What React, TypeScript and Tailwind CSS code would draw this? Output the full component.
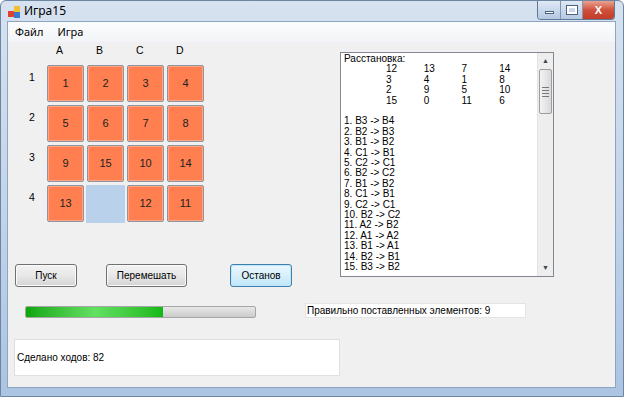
import React from 'react'

const tiles: (number | null)[][] = [
  [1, 2, 3, 4],
  [5, 6, 7, 8],
  [9, 15, 10, 14],
  [13, null, 12, 11],
]

const layout = [
  [12, 13, 7, 14],
  [3, 4, 1, 8],
  [2, 9, 5, 10],
  [15, 0, 11, 6],
]

const moves = [
  'B3 -> B4',
  'B2 -> B3',
  'B1 -> B2',
  'C1 -> B1',
  'C2 -> C1',
  'B2 -> C2',
  'B1 -> B2',
  'C1 -> B1',
  'C2 -> C1',
  'B2 -> C2',
  'A2 -> B2',
  'A1 -> A2',
  'B1 -> A1',
  'B2 -> B1',
  'B3 -> B2',
]

const sans = { fontFamily: '"Liberation Sans", Arial, sans-serif' }

const WinButton = ({ label, focused, className }: { label: string; focused?: boolean; className?: string }) => (
  <div
    className={
      'h-[23px] rounded-[3px] border flex items-center justify-center text-[10px] text-black ' +
      (focused
        ? 'border-[#3c7fb1] bg-gradient-to-b from-[#eaf6fd] via-[#d9f0fc] to-[#bee6fd] shadow-[inset_0_0_0_1px_#c4e5f6] '
        : 'border-[#707070] bg-gradient-to-b from-[#f2f2f2] via-[#e8e8e8] to-[#d4d4d4] shadow-[inset_0_0_0_1px_#fbfbfb] ') +
      (className || '')
    }
  >
    {label}
  </div>
)

export default function App() {
  return (
    <div
      className="w-[624px] h-[397px] flex flex-col overflow-hidden border border-[#6f86a3] rounded-t-[6px] bg-gradient-to-b from-[#d6e2ef] via-[#c3d5ea] to-[#abc4e2]"
      style={sans}
    >
      {/* title bar */}
      <div className="h-[20px] flex items-start shrink-0">
        <svg width="14" height="14" viewBox="0 0 14 14" className="ml-[7px] mt-[4px]">
          <rect x="0" y="6" width="6" height="6" fill="#e04030" />
          <rect x="6" y="1" width="6" height="6" fill="#f0c030" />
          <rect x="6" y="7" width="6" height="6" fill="#3a7ad0" />
        </svg>
        <span className="ml-[2px] mt-[3px] text-[12px] text-black" style={{ fontFamily: '"Noto Sans", sans-serif', lineHeight: '14px' }}>
          Игра15
        </span>
        <div className="ml-auto mr-[8px] flex h-[19px] border border-t-0 border-[#5f7897] rounded-b-[4px] overflow-hidden">
          <div className="w-[23px] bg-gradient-to-b from-[#dfe9f5] to-[#b3c8e2] border-r border-[#7f95b0] flex items-center justify-center">
            <div className="w-[9px] h-[3px] bg-white border border-[#50627a] mt-[5px]" />
          </div>
          <div className="w-[22px] bg-gradient-to-b from-[#dfe9f5] to-[#b3c8e2] border-r border-[#7f95b0] flex items-center justify-center">
            <div className="w-[10px] h-[8px] border-2 border-white outline outline-1 outline-[#50627a]" />
          </div>
          <div className="w-[31px] bg-gradient-to-b from-[#e8a190] via-[#d0503c] to-[#c13b28] flex items-center justify-center text-white text-[11px] font-bold">
            X
          </div>
        </div>
      </div>

      {/* client area */}
      <div className="ml-[6px] mr-[7px] mb-[8px] flex-1 bg-[#f0f0f0] border border-[#8fa5bf] flex flex-col">
        {/* menu */}
        <div className="h-[20px] flex items-center gap-[14px] pl-[7px] text-[11px] text-black bg-gradient-to-b from-[#fbfcfd] to-[#f2f4f7]" style={{ fontFamily: '"Noto Sans", sans-serif' }}>
          <span>Файл</span>
          <span>Игра</span>
        </div>

        <div className="flex">
          {/* left part */}
          <div className="w-[332px] flex flex-col">
            <div className="flex pl-[39px] h-[23px] pt-[2px] text-[10.5px] leading-[12px] text-black">
              {['A', 'B', 'C', 'D'].map((c) => (
                <div key={c} className="w-[40px] pl-[9px]">
                  {c}
                </div>
              ))}
            </div>
            <div className="flex flex-col gap-[3px]">
              {tiles.map((row, r) => (
                <div key={r} className="flex h-[37px]">
                  <div className="w-[39px] pl-[21px] pt-[6px] text-[10.5px] leading-[12px] text-black">{r + 1}</div>
                  {row.map((n, c) =>
                    n === null ? (
                      <div key={c} className="w-[39px] h-[38px] -ml-[1px] mr-[2px] bg-[#b9d1ea]" />
                    ) : (
                      <div
                        key={c}
                        className="w-[37px] h-[37px] mr-[3px] bg-[#ff7f50] border border-[#8d96a0] rounded-[2px] shadow-[inset_0_0_0_1px_#ffa585] flex items-center justify-center text-[11px] text-[#222]"
                      >
                        {n}
                      </div>
                    )
                  )}
                </div>
              ))}
            </div>
            <div className="flex mt-[42px] pl-[7px]">
              <WinButton label="Пуск" className="w-[62px]" />
              <WinButton label="Перемешать" className="w-[81px] ml-[29px]" />
              <WinButton label="Останов" focused className="w-[62px] ml-[43px]" />
            </div>
          </div>

          {/* list box */}
          <div className="mt-[10px] w-[214px] h-[225px] border border-[#828790] bg-white flex text-[10px] leading-[10.4px] text-black">
            <div className="flex-1 pl-[3px] pt-[1px] overflow-hidden">
              <div>Расстановка:</div>
              {layout.map((row, i) => (
                <div key={i} className="flex pl-[42px]">
                  {row.map((v, j) => (
                    <div key={j} className="w-[42px]">
                      {v}
                    </div>
                  ))}
                </div>
              ))}
              <div className="h-[10.4px]" />
              {moves.map((m, i) => (
                <div key={i}>
                  {i + 1}. {m}
                </div>
              ))}
            </div>
            <div className="w-[16px] bg-[#eeeeee] border-l border-[#e3e3e3] flex flex-col">
              <div className="h-[16px] flex items-center justify-center text-[7px] text-[#444]">▲</div>
              <div className="mx-[1px] h-[45px] rounded-[2px] border border-[#9a9da2] bg-gradient-to-r from-[#f3f3f3] to-[#d9d9d9] flex flex-col items-center justify-center gap-[2px]">
                <div className="w-[7px] h-[1px] bg-[#777]" />
                <div className="w-[7px] h-[1px] bg-[#777]" />
                <div className="w-[7px] h-[1px] bg-[#777]" />
                <div className="w-[7px] h-[1px] bg-[#777]" />
              </div>
              <div className="flex-1" />
              <div className="h-[16px] flex items-center justify-center text-[7px] text-[#444]">▼</div>
            </div>
          </div>
        </div>

        {/* progress + counter */}
        <div className="flex items-start mt-[16px]">
          <div className="ml-[17px] mt-[3px] w-[231px] h-[12px] rounded-[2px] border border-[#a6a6a6] bg-gradient-to-b from-[#e8e8e8] via-[#dadada] to-[#cbcbcb] overflow-hidden">
            <div className="h-full w-[60%] bg-gradient-to-r from-[#0aa60a] via-[#62e062] to-[#11b811]" />
          </div>
          <div className="ml-[49px] w-[221px] h-[15px] bg-white border border-[#e4e4e4] pl-[1px] text-[10px] leading-[13px] text-black">
            Правильно поставленных элементов: 9
          </div>
        </div>

        <div className="ml-[6px] mt-[21px] w-[326px] h-[37px] bg-white border border-[#e0e0e0] flex items-center pl-[2px] text-[10px] text-black">
          Сделано ходов: 82
        </div>
      </div>
    </div>
  )
}
